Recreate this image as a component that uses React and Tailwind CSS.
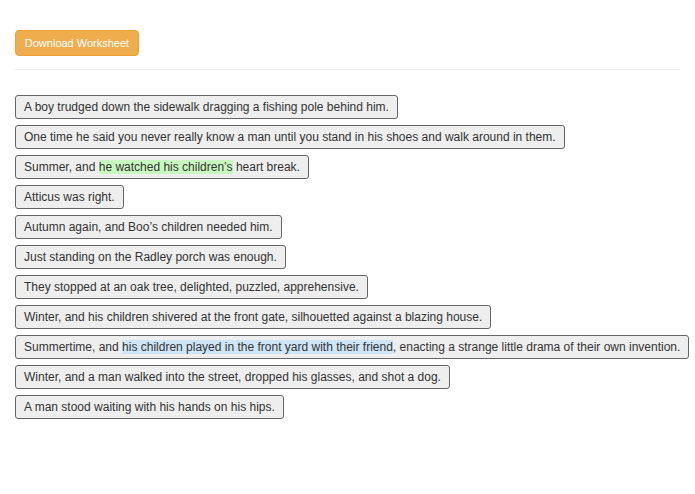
const sentences = [
  ['A boy trudged down the sidewalk dragging a fishing pole behind him.'],
  ['One time he said you never really know a man until you stand in his shoes and walk around in them.'],
  ['Summer, and ', 'he watched his children’s', ' heart break.', 'green'],
  ['Atticus was right.'],
  ['Autumn again, and Boo’s children needed him.'],
  ['Just standing on the Radley porch was enough.'],
  ['They stopped at an oak tree, delighted, puzzled, apprehensive.'],
  ['Winter, and his children shivered at the front gate, silhouetted against a blazing house.'],
  ['Summertime, and ', 'his children played in the front yard with their friend', ', enacting a strange little drama of their own invention.', 'blue'],
  ['Winter, and a man walked into the street, dropped his glasses, and shot a dog.'],
  ['A man stood waiting with his hands on his hips.'],
]

export default function App() {
  return (
    <div className="min-h-[494px] bg-white px-[15px] pt-[30px] text-[#333]" style={{ fontFamily: '"Liberation Sans", Arial, sans-serif' }}>
      <button className="h-[26px] w-[124px] rounded-[4px] border border-[#eea236] bg-[#f0ad4e] text-[11px] text-white">
        Download Worksheet
      </button>
      <hr className="mt-[13px] mb-[25px] border-t border-[#eee]" />
      <div className="flex flex-col items-start gap-[6px]">
        {sentences.map((s, i) => (
          <div key={i} className="h-[24px] whitespace-nowrap rounded-[3px] border border-[#666] bg-[#eee] px-[8px] text-[12px] leading-[22px]">
            {s.length === 1 ? s[0] : (
              <>
                {s[0]}
                <span className={s[3] === 'green' ? 'bg-[#c9f7c0]' : 'bg-[#cfe5f8]'}>{s[1]}</span>
                {s[2]}
              </>
            )}
          </div>
        ))}
      </div>
    </div>
  )
}
